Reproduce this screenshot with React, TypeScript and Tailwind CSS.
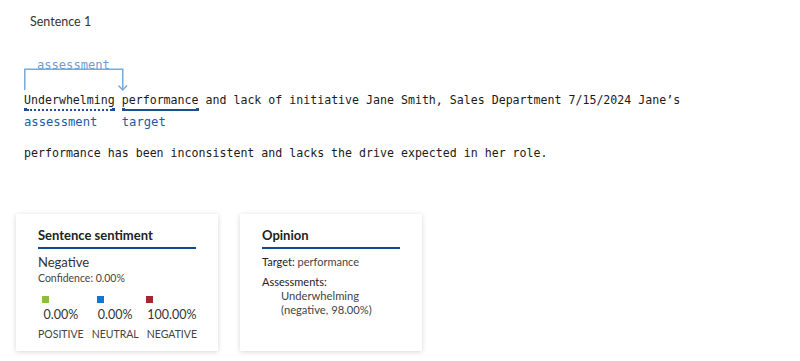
const sans = "font-['Lato','Liberation_Sans',sans-serif]";
const mono = "font-['DejaVu_Sans_Mono','Liberation_Mono',monospace]";

const Underline = ({ dotted }: { dotted?: boolean }) => (
  <div className="flex h-[3px] w-full items-center">
    <span className="size-[3px] shrink-0 bg-[#1f4f8f]" />
    <span
      className={`h-0 flex-1 border-t-2 border-[#1f4f8f] ${dotted ? 'border-dotted' : 'border-solid'}`}
    />
    <span className="size-[3px] shrink-0 bg-[#1f4f8f]" />
  </div>
);

const Annotated = ({
  word,
  label,
  dotted,
}: {
  word: string;
  label: string;
  dotted?: boolean;
}) => (
  <span className="inline-flex flex-col align-top">
    <span className="leading-[16px]">{word}</span>
    <Underline dotted={dotted} />
    <span className="mt-[3px] text-[12.2px] leading-[16px] text-[#1b5ca6]">
      {label}
    </span>
  </span>
);

const SentimentColumn = ({
  color,
  value,
  label,
}: {
  color: string;
  value: string;
  label: string;
}) => (
  <div className="flex flex-col items-center">
    <div className="flex flex-col items-start">
      <span className={`ml-[-1px] size-[7px] ${color}`} />
      <span className="mt-[4px] text-[12.5px] leading-[16px] text-[#333]">
        {value}
      </span>
    </div>
    <span className="mt-[4px] text-[10.5px] leading-[14px] text-[#444]">
      {label}
    </span>
  </div>
);

const CardTitle = ({ children }: { children: React.ReactNode }) => (
  <div className="border-b-2 border-[#0f4c8f] pb-[3px] text-[13px] font-bold leading-[17px] text-[#222]">
    {children}
  </div>
);

export default function App() {
  return (
    <div className={`h-[361px] w-[800px] overflow-hidden bg-white ${sans}`}>
      <div className="pl-[30px] pt-[14px] text-[12.5px] leading-[16px] text-[#333]">
        Sentence 1
      </div>

      <div className={`pl-[24px] pt-[26px] text-[11.6px] text-[#1a1a1a] ${mono}`}>
        {/* relation bracket */}
        <div className="relative h-[36px] w-[100px]">
          <svg
            className="absolute left-0 top-0"
            fill="none"
            height="36"
            stroke="#7aaad8"
            strokeWidth="1.5"
            width="104"
          >
            <path d="M0.75 34 V13.25 H98.75 V34" />
            <path d="M94.5 29.5 L98.75 34 L103 29.5" />
          </svg>
          <span className="absolute left-[13px] top-[1px] text-[12.1px] leading-[16px] text-[#6b9fd3]">
            assessment
          </span>
        </div>

        <div className="whitespace-pre leading-[16px]">
          <Annotated dotted label="assessment" word="Underwhelming" />
          <span> </span>
          <Annotated label="target" word="performance" />
          <span>
            {' and lack of initiative Jane Smith, Sales Department 7/15/2024 Jane’s'}
          </span>
        </div>

        <div className="mt-[15px] leading-[16px]">
          performance has been inconsistent and lacks the drive expected in her
          role.
        </div>
      </div>

      <div className="mt-[53px] flex gap-[22px] pl-[16px]">
        <div className="h-[137px] w-[202px] bg-white px-[22px] pt-[13px] shadow-[0_1px_5px_rgba(0,0,0,0.16)]">
          <CardTitle>Sentence sentiment</CardTitle>
          <div className="mt-[5px] text-[13px] leading-[17px] text-[#333]">
            Negative
          </div>
          <div className="text-[10.5px] leading-[14px] text-[#444]">
            Confidence: 0.00%
          </div>
          <div className="mt-[11px] flex gap-[8px]">
            <SentimentColumn
              color="bg-[#8cbd3b]"
              label="POSITIVE"
              value="0.00%"
            />
            <SentimentColumn
              color="bg-[#1476d4]"
              label="NEUTRAL"
              value="0.00%"
            />
            <SentimentColumn
              color="bg-[#a4262c]"
              label="NEGATIVE"
              value="100.00%"
            />
          </div>
        </div>

        <div className="h-[137px] w-[182px] bg-white px-[22px] pt-[13px] shadow-[0_1px_5px_rgba(0,0,0,0.16)]">
          <CardTitle>Opinion</CardTitle>
          <div className="mt-[6px] text-[11px] leading-[14px] text-[#444]">
            <span className="text-[#222]">Target:</span> performance
          </div>
          <div className="mt-[6px] text-[11px] leading-[14px] text-[#222]">
            Assessments:
          </div>
          <div className="pl-[19px] text-[11.2px] leading-[14px] text-[#444]">
            <div>Underwhelming</div>
            <div>(negative, 98.00%)</div>
          </div>
        </div>
      </div>
    </div>
  );
}
